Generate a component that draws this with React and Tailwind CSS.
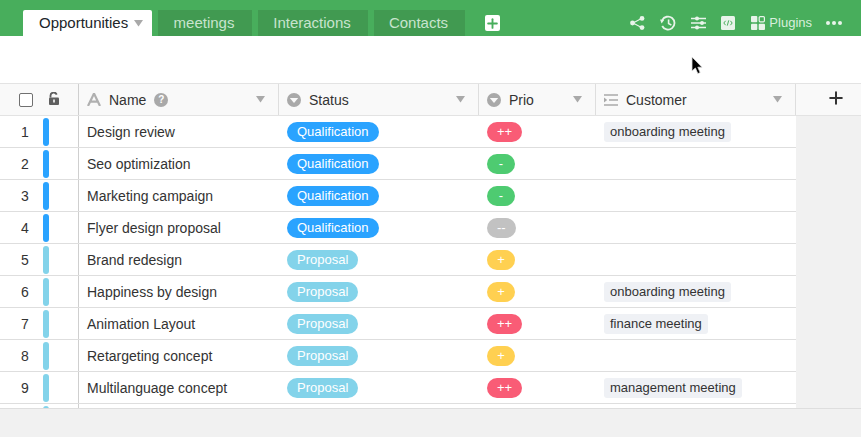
import React from 'react';
import { Plus } from 'lucide-react';

const rows = [
  { id: 1, name: 'Design review', status: 'Qualification', prio: '++', customer: 'onboarding meeting' },
  { id: 2, name: 'Seo optimization', status: 'Qualification', prio: '-' },
  { id: 3, name: 'Marketing campaign', status: 'Qualification', prio: '-' },
  { id: 4, name: 'Flyer design proposal', status: 'Qualification', prio: '--' },
  { id: 5, name: 'Brand redesign', status: 'Proposal', prio: '+' },
  { id: 6, name: 'Happiness by design', status: 'Proposal', prio: '+', customer: 'onboarding meeting' },
  { id: 7, name: 'Animation Layout', status: 'Proposal', prio: '++', customer: 'finance meeting' },
  { id: 8, name: 'Retargeting concept', status: 'Proposal', prio: '+' },
  { id: 9, name: 'Multilanguage concept', status: 'Proposal', prio: '++', customer: 'management meeting' },
  { id: 10, name: '', status: '', prio: '', hideId: true },
];

const prioColors = {
  '++': 'bg-[#f95c76]',
  '+': 'bg-[#ffd051]',
  '-': 'bg-[#4ecb71]',
  '--': 'bg-[#c2c2c2]',
};

const Caret = ({ className }) => (
  <svg width="9" height="7" viewBox="0 0 9 7" className={className}>
    <path d="M0 0h9L4.5 6.5z" fill="currentColor" />
  </svg>
);

const SelectIcon = () => (
  <svg width="14" height="14" viewBox="0 0 14 14" className="shrink-0">
    <circle cx="7" cy="7" r="7" fill="#a9a9a9" />
    <path d="M2.8 5h8.4L7 10z" fill="#f9f9f9" />
  </svg>
);

const Tab = ({ label, className }) => (
  <div className={`h-[26px] flex items-center justify-center pr-[2px] bg-[#419a51] text-[15px] text-[#c8e4ce] ${className}`}>
    {label}
  </div>
);

const HeaderCell = ({ className, icon, label, help }) => (
  <div className={`h-full flex items-center border-r border-[#dedede] pl-2 pr-[13px] ${className}`}>
    {icon}
    <span className="ml-2 text-sm text-[#333]">{label}</span>
    {help && (
      <span className="ml-2 w-[14px] h-[14px] rounded-full bg-[#a9a9a9] text-white text-[10px] font-bold flex items-center justify-center">?</span>
    )}
    <Caret className="ml-auto text-[#a9a9a9]" />
  </div>
);

const Row = ({ row }) => {
  const isQualification = row.status === 'Qualification';
  return (
    <div className="h-8 shrink-0 flex border-b border-[#dedede] bg-white w-[796px]">
      <div className="w-[79px] shrink-0 border-r border-[#cfcfcf] flex items-center">
        <span className="w-[43px] pl-[7px] text-center text-sm text-[#333]">{row.hideId ? '' : row.id}</span>
        <span className={`w-[6px] h-7 rounded-[3px] ${row.id < 5 ? 'bg-[#2aa3ff]' : 'bg-[#83d3ea]'}`} />
      </div>
      <div className="w-[200px] shrink-0 pl-2 flex items-center text-sm text-[#333]">{row.name}</div>
      <div className="w-[200px] shrink-0 pl-2 flex items-center">
        {row.status && (
          <span className={`h-5 px-[10px] rounded-[10px] text-[13px] leading-5 text-white ${isQualification ? 'bg-[#2aa3ff]' : 'bg-[#83d3ea]'}`}>
            {row.status}
          </span>
        )}
      </div>
      <div className="w-[117px] shrink-0 pl-2 flex items-center">
        {row.prio && (
          <span className={`h-5 min-w-[28px] px-[10px] rounded-[10px] text-[13px] leading-[19px] text-center text-white ${prioColors[row.prio]}`}>
            {row.prio}
          </span>
        )}
      </div>
      <div className="w-[200px] shrink-0 pl-2 flex items-center">
        {row.customer && (
          <span className="h-5 px-[6px] rounded-[3px] bg-[#eff1f5] text-[13px] leading-5 text-[#333]">{row.customer}</span>
        )}
      </div>
    </div>
  );
};

export default function App() {
  return (
    <div className="relative w-[861px] h-[437px] overflow-hidden flex flex-col bg-[#f1f1f1] font-['Liberation_Sans',Arial,sans-serif]">
      {/* top bar */}
      <div className="h-9 shrink-0 bg-[#48ae5c] flex items-end pl-[23px]">
        <div className="w-[129px] h-[26px] bg-white rounded-t-[2px] flex items-center pl-4 text-[15px] text-[#212529]">
          Opportunities
          <Caret className="ml-[6px] mt-[1px] text-[#a9a9a9]" />
        </div>
        <Tab label="meetings" className="ml-[6px] w-[94px]" />
        <Tab label="Interactions" className="ml-[6px] w-[110px]" />
        <Tab label="Contacts" className="ml-[6px] w-[91px]" />
        <div className="ml-5 mb-[5px] w-[15px] h-[16px] bg-white rounded-[2px] flex items-center justify-center">
          <Plus size={15} strokeWidth={3} className="text-[#48ae5c]" />
        </div>
        <div className="ml-auto h-9 flex items-center pr-[19px] pt-[10px]">
          <svg width="15" height="14" viewBox="0 0 15 14">
            <path d="M3 7l8.5-4.5M3 7l8.5 4.5" stroke="#e8f4ea" strokeWidth="1.2" fill="none" />
            <circle cx="2.5" cy="7" r="2.4" fill="#e8f4ea" />
            <circle cx="12" cy="2.4" r="2.4" fill="#e8f4ea" />
            <circle cx="12" cy="11.6" r="2.4" fill="#e8f4ea" />
          </svg>
          <svg width="16" height="16" viewBox="0 0 16 16" className="ml-[15px]">
            <path d="M2.2 5.2A6.5 6.5 0 1 1 2.2 11" stroke="#e8f4ea" strokeWidth="1.8" fill="none" />
            <path d="M0 4.5l4.2.6-2.6 3.3z" fill="#e8f4ea" />
            <path d="M8.6 4.5v4l2.8 1.6" stroke="#e8f4ea" strokeWidth="1.6" fill="none" />
          </svg>
          <svg width="15" height="14" viewBox="0 0 15 14" className="ml-[15px]">
            <path d="M0 2.5h15M0 7h15M0 11.5h15" stroke="#e8f4ea" strokeWidth="1.3" />
            <circle cx="6" cy="2.5" r="2" fill="#e8f4ea" />
            <circle cx="11" cy="7" r="2" fill="#e8f4ea" />
            <circle cx="6" cy="11.5" r="2" fill="#e8f4ea" />
          </svg>
          <svg width="14" height="14" viewBox="0 0 14 14" className="ml-[15px]">
            <rect width="14" height="14" rx="1.5" fill="#e8f4ea" />
            <path d="M4.6 4.8L2.8 7l1.8 2.2M9.4 4.8L11.2 7 9.4 9.2M7.7 4.4L6.3 9.6" stroke="#48ae5c" strokeWidth="1" fill="none" />
          </svg>
          <svg width="14" height="14" viewBox="0 0 14 14" className="ml-4">
            <rect x="0" y="0" width="6.3" height="6.3" rx="1" fill="#e8f4ea" />
            <rect x="8.2" y="0.6" width="5.2" height="5.2" rx="1" fill="none" stroke="#e8f4ea" strokeWidth="1.2" />
            <rect x="0" y="7.7" width="6.3" height="6.3" rx="1" fill="#e8f4ea" />
            <rect x="7.7" y="7.7" width="6.3" height="6.3" rx="1" fill="#e8f4ea" />
          </svg>
          <span className="ml-[4px] text-[13px] text-[#d8eedd]">Plugins</span>
          <span className="ml-[14px] flex gap-[2px]">
            <span className="w-[4px] h-[4px] rounded-full bg-[#e8f4ea]" />
            <span className="w-[4px] h-[4px] rounded-full bg-[#e8f4ea]" />
            <span className="w-[4px] h-[4px] rounded-full bg-[#e8f4ea]" />
          </span>
        </div>
      </div>

      {/* toolbar strip */}
      <div className="h-[47px] shrink-0 bg-white" />

      {/* column headers */}
      <div className="h-[33px] shrink-0 flex items-center bg-[#f9f9f9] border-t border-b border-[#e3e3e3]">
        <div className="w-[79px] h-full shrink-0 border-r border-[#cfcfcf] flex items-center">
          <span className="ml-[19px] w-[14px] h-[14px] border border-[#707070] rounded-[2px] bg-white" />
          <svg width="12" height="13" viewBox="0 0 12 13" className="ml-[15px] mb-[2px]">
            <path d="M2.5 5.5V3.6a3.2 3.2 0 0 1 6.2-1" stroke="#5f5f5f" strokeWidth="1.8" fill="none" />
            <rect x="1" y="5.5" width="10" height="7.5" rx="1" fill="#5f5f5f" />
            <rect x="5.2" y="7.5" width="1.6" height="3" fill="#f9f9f9" />
          </svg>
        </div>
        <HeaderCell
          className="w-[200px]"
          label="Name"
          help
          icon={
            <svg width="14" height="13" viewBox="0 0 14 13" className="shrink-0">
              <path d="M1 13L7 .5 13 13M3.6 8.6h6.8" stroke="#b0b0b0" strokeWidth="2.2" fill="none" />
            </svg>
          }
        />
        <HeaderCell className="w-[200px]" label="Status" icon={<SelectIcon />} />
        <HeaderCell className="w-[117px]" label="Prio" icon={<SelectIcon />} />
        <HeaderCell
          className="w-[200px]"
          label="Customer"
          icon={
            <svg width="14" height="12" viewBox="0 0 14 12" className="shrink-0">
              <path d="M0 1h14M5 6h9M0 11h14" stroke="#a9a9a9" strokeWidth="1.6" />
              <path d="M0 3.6L3.2 6 0 8.4z" fill="#a9a9a9" />
            </svg>
          }
        />
        <div className="flex-1 flex items-center justify-center pl-[14px]">
          <Plus size={20} strokeWidth={2.4} className="text-[#333] mb-[3px]" />
        </div>
      </div>

      {/* rows */}
      <div className="h-[292px] shrink-0 overflow-hidden flex flex-col">
        {rows.map(row => (
          <Row key={row.id} row={row} />
        ))}
      </div>

      {/* footer */}
      <div className="flex-1 border-t border-[#dedede] bg-[#f1f1f1]" />

      {/* mouse cursor */}
      <svg width="14" height="20" viewBox="0 0 14 20" className="absolute left-[691px] top-[56px]">
        <path d="M1 1v14l3.4-3 2.4 5.6 2.4-1-2.4-5.4H11z" fill="#000" stroke="#ddd" strokeWidth="0.8" />
      </svg>
    </div>
  );
}
